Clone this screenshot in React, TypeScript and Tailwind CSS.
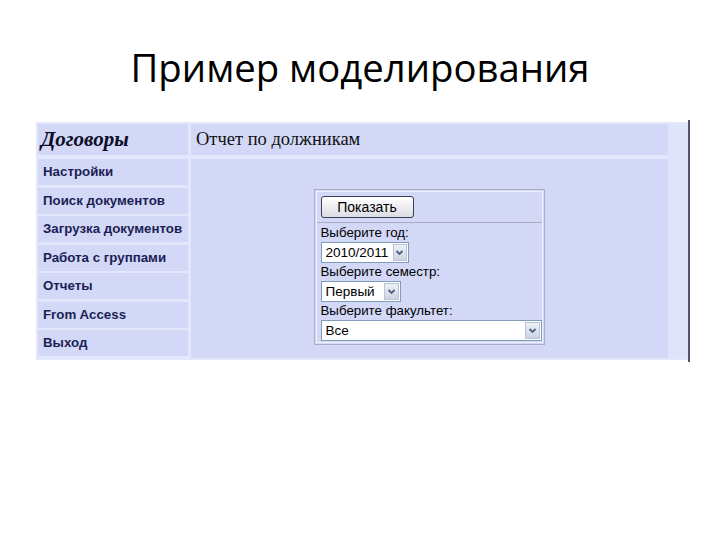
import React from 'react';

const menu = [
    'Настройки',
    'Поиск документов',
    'Загрузка документов',
    'Работа с группами',
    'Отчеты',
    'From Access',
    'Выход',
];

function Select({ value, width }: { value: string; width: string }) {
    return (
        <div className={`flex h-[21px] ${width} items-stretch border border-[#7f9db9] bg-white`}>
            <div className="flex flex-1 items-center px-[4px] text-[13.5px] leading-none text-black">{value}</div>
            <div className="m-[1px] flex w-[15px] items-center justify-center border border-[#b7c3d8] bg-gradient-to-b from-[#eef1f7] to-[#cdd4e2]">
                <svg width="9" height="7" viewBox="0 0 9 7">
                    <path d="M1.5 2 L4.5 5 L7.5 2" fill="none" stroke="#4d6185" strokeWidth="1.8" />
                </svg>
            </div>
        </div>
    );
}

export default function App() {
    return (
        <div className="h-[540px] w-[720px] bg-white" style={{ fontFamily: '"Liberation Sans", Arial, sans-serif' }}>
            <h1 className="pt-[41px] text-center text-[38.3px] leading-[52px] text-black" style={{ fontFamily: '"Open Sans", sans-serif' }}>
                Пример моделирования
            </h1>

            <div className="ml-[36px] mt-[29px] flex h-[238px]">
                <div className="flex bg-[#e3e7fb] py-[2px] pl-[2px]">
                    {/* left menu */}
                    <div className="flex w-[150px] shrink-0 flex-col gap-[2.5px]">
                        <div className="mb-[1.5px] flex h-[31px] items-center bg-[#d2d8f6] px-[3px]">
                            <span className="text-[21px] font-bold italic text-[#0d0d2a]" style={{ fontFamily: '"Liberation Serif", serif' }}>
                                Договоры
                            </span>
                        </div>
                        {menu.map(item => (
                            <div key={item} className="flex h-[26px] items-center bg-[#d2d8f6] px-[5px]">
                                <span className="whitespace-nowrap text-[13.3px] font-bold text-[#1c1f55]">{item}</span>
                            </div>
                        ))}
                    </div>

                    {/* right panel */}
                    <div className="ml-[3px] flex w-[477px] shrink-0 flex-col gap-[4px]">
                        <div className="flex h-[31px] items-center bg-[#d2d8f6] px-[5px]">
                            <span className="text-[18.5px] text-[#111]" style={{ fontFamily: '"Liberation Serif", serif' }}>
                                Отчет по должникам
                            </span>
                        </div>
                        <div className="flex flex-1 justify-center bg-[#d2d8f6] pt-[30px]">
                            <div className="ml-[-1px] h-[156px] w-[231px] border border-[#a9aec4] p-[1px]">
                                <div className="h-full border border-[#eef0fb]">
                                    <div className="border-b border-[#a9aec4] px-[4px] pb-[3px] pt-[3px]">
                                        <button className="h-[22px] w-[93px] rounded-[3px] border border-[#3b3f55] bg-gradient-to-b from-white to-[#dcdce4] text-[14px] text-black">
                                            Показать
                                        </button>
                                    </div>
                                    <div className="flex flex-col px-[4px] pt-[1px] text-[13.3px] leading-[18px] text-black">
                                        <span>Выберите год:</span>
                                        <Select value="2010/2011" width="w-[88px]" />
                                        <span>Выберите семестр:</span>
                                        <Select value="Первый" width="w-[80px]" />
                                        <span>Выберите факультет:</span>
                                        <Select value="Все" width="w-[221px]" />
                                    </div>
                                </div>
                            </div>
                        </div>
                    </div>
                    <div className="w-[20px] shrink-0 bg-[#dfe4fb]" />
                </div>
                <div className="-my-[2px] w-[2px] shrink-0 bg-[#55556a]" />
            </div>
        </div>
    );
}
